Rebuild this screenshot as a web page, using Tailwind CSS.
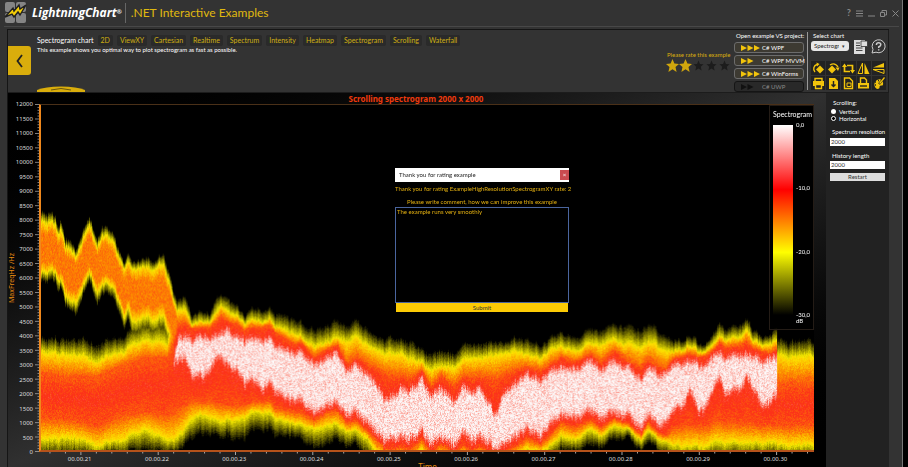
<!DOCTYPE html>
<html lang="en">
<head>
<meta charset="utf-8">
<title>LightningChart .NET Interactive Examples</title>
<script src="https://cdn.jsdelivr.net/npm/@tailwindcss/browser@4"></script>
</head>
<body class="h-screen overflow-hidden bg-black pr-[5px] font-[Lato,'Noto_Sans',sans-serif] text-[6px] leading-[8px] text-white">
<div class="flex h-full flex-col border-r border-[#777] bg-[#333] pl-[7px] pr-[13px]">
  <header class="-ml-[3px] -mr-[10px] flex h-[27px] shrink-0 items-center border-b border-[#484848]">
    <svg class="h-[22px] w-[23px]" viewBox="0 0 23 22" role="img" aria-label="LightningChart logo">
      <g fill="#858585"><rect x="1" y="0" width="10" height="10" rx="2"/><rect x="12" y="0" width="10" height="10" rx="2"/><rect x="1" y="11" width="10" height="10" rx="2"/><rect x="12" y="11" width="10" height="10" rx="2"/></g>
      <path d="M1 15L9 6L10 9L15 3L16 7L22 3L16 13L14 10L10 15L8 12Z" fill="#f5cf08" stroke="#202020" stroke-width="1.400"/>
    </svg>
    <span class="ml-[5px] font-['Open_Sans',sans-serif] text-[12px] font-bold italic leading-[16px]">LightningChart<sup class="text-[6px]">®</sup></span>
    <span class="ml-[3px] h-5 w-px bg-[#666]"></span>
    <h1 class="ml-[5px] text-[12px] leading-[16px] text-[#e0b90f]">.NET Interactive Examples</h1>
    <nav class="ml-auto flex items-center gap-[5px] text-[#888]" aria-label="Window">
      <button aria-label="Help" class="text-[9px] font-bold">?</button>
      <button aria-label="Menu"><svg class="size-[7px]" viewBox="0 0 7 7" stroke="currentColor"><path d="M0 1H7M0 3.500H7M0 6H7"/></svg></button>
      <button aria-label="Minimize"><svg class="size-[7px]" viewBox="0 0 7 7" stroke="currentColor"><path d="M0 6H7"/></svg></button>
      <button aria-label="Restore"><svg class="size-[7px]" viewBox="0 0 7 7" fill="none" stroke="currentColor"><path d="M.5 2.500H4.500V6.500H.5ZM2 2V.5H6.500V5H5"/></svg></button>
      <button aria-label="Close"><svg class="size-[7px]" viewBox="0 0 7 7" stroke="currentColor"><path d="M.5.5L6.500 6.500M6.500.5L.5 6.500"/></svg></button>
    </nav>
  </header>

  <main class="mt-[2px] flex min-h-0 flex-1 flex-col border-l border-t border-[#151515]">
    <section class="flex h-[63px] shrink-0 border-r border-b border-[#1c1c1c]">
      <button aria-label="Back" class="mt-4 flex h-[29px] w-[23px] items-center justify-center rounded-r-[3px] bg-[#d9ad0c]">
        <svg class="h-[14px] w-[7px]" viewBox="0 0 7 14" fill="none" stroke="#222" stroke-width="1.800"><path d="M6 1L1.500 7L6 13"/></svg>
      </button>
      <div class="ml-[6px] flex flex-1 flex-col pt-[5px]">
        <div class="flex items-center gap-[4px] text-[7px] leading-[11px]">
          <h2>Spectrogram chart</h2>
          <a href="#" class="rounded-[2px] bg-[#2a2a2a] px-[3px] text-[#d0b012]">2D</a>
          <a href="#" class="rounded-[2px] bg-[#2a2a2a] px-[3px] text-[#d0b012]">ViewXY</a>
          <a href="#" class="rounded-[2px] bg-[#2a2a2a] px-[3px] text-[#d0b012]">Cartesian</a>
          <a href="#" class="rounded-[2px] bg-[#2a2a2a] px-[3px] text-[#d0b012]">Realtime</a>
          <a href="#" class="rounded-[2px] bg-[#2a2a2a] px-[3px] text-[#d0b012]">Spectrum</a>
          <a href="#" class="rounded-[2px] bg-[#2a2a2a] px-[3px] text-[#d0b012]">Intensity</a>
          <a href="#" class="rounded-[2px] bg-[#2a2a2a] px-[3px] text-[#d0b012]">Heatmap</a>
          <a href="#" class="rounded-[2px] bg-[#2a2a2a] px-[3px] text-[#d0b012]">Spectrogram</a>
          <a href="#" class="rounded-[2px] bg-[#2a2a2a] px-[3px] text-[#d0b012]">Scrolling</a>
          <a href="#" class="rounded-[2px] bg-[#2a2a2a] px-[3px] text-[#d0b012]">Waterfall</a>
        </div>
        <p>This example shows you optimal way to plot spectrogram as fast as possible.</p>
        <svg class="mt-auto h-[6px] w-[48px]" viewBox="0 0 48 6" fill="none"><path d="M0 6V4Q8 .5 24 .5T48 4V6Z" fill="#d9ad0c"/><path d="M14 4Q24 1 34 4" stroke="#6b5810"/></svg>
      </div>
      <div class="mr-[6px] flex w-[62px] flex-col pt-[21px]">
        <span class="whitespace-nowrap pl-px text-[#d9ad0c]">Please rate this example</span>
        <div class="flex" role="group" aria-label="Rating">
          <button aria-label="1 star"><svg class="size-[13px]" viewBox="0 0 13 13" fill="#d0a60d"><path d="M6.500 0L8.400 4.500L13 5L9.500 8.100L10.600 13L6.500 10.300L2.400 13L3.500 8.100L0 5L4.600 4.500Z"/></svg></button>
          <button aria-label="2 stars"><svg class="size-[13px]" viewBox="0 0 13 13" fill="#d0a60d"><path d="M6.500 0L8.400 4.500L13 5L9.500 8.100L10.600 13L6.500 10.300L2.400 13L3.500 8.100L0 5L4.600 4.500Z"/></svg></button>
          <button aria-label="3 stars"><svg class="size-[13px]" viewBox="-2 -2 17 17" fill="#1c1c1c"><path d="M6.500 0L8.400 4.500L13 5L9.500 8.100L10.600 13L6.500 10.300L2.400 13L3.500 8.100L0 5L4.600 4.500Z"/></svg></button>
          <button aria-label="4 stars"><svg class="size-[13px]" viewBox="-2 -2 17 17" fill="#1c1c1c"><path d="M6.500 0L8.400 4.500L13 5L9.500 8.100L10.600 13L6.500 10.300L2.400 13L3.500 8.100L0 5L4.600 4.500Z"/></svg></button>
          <button aria-label="5 stars"><svg class="size-[13px]" viewBox="-2 -2 17 17" fill="#1c1c1c"><path d="M6.500 0L8.400 4.500L13 5L9.500 8.100L10.600 13L6.500 10.300L2.400 13L3.500 8.100L0 5L4.600 4.500Z"/></svg></button>
        </div>
      </div>
      <div class="flex w-[73px] flex-col gap-[2px] pr-[3px] pt-[2px]">
        <span class="whitespace-nowrap pl-[2px]">Open example VS project:</span>
        <button class="flex h-[11px] items-center gap-[2px] rounded-[3px] border border-[#6c6c6c] bg-[#3d3a32] pl-[6px]"><svg class="h-[6px] w-[19px]" viewBox="0 0 19 6" fill="#f2c40c"><path d="M0 0L6 3L0 6ZM6.500 0L12.500 3L6.500 6ZM13 0L19 3L13 6Z"/></svg>C# WPF</button>
        <button class="flex h-[11px] items-center gap-[2px] whitespace-nowrap rounded-[3px] border border-[#6c6c6c] bg-[#3d3a32] pl-[6px]"><svg class="h-[6px] w-[19px] shrink-0" viewBox="0 0 19 6" fill="#f2c40c"><path d="M0 0L6 3L0 6ZM6.500 0L12.500 3L6.500 6Z"/></svg>C# WPF MVVM</button>
        <button class="flex h-[11px] items-center gap-[2px] rounded-[3px] border border-[#6c6c6c] bg-[#3d3a32] pl-[6px]"><svg class="h-[6px] w-[19px]" viewBox="0 0 19 6" fill="#f2c40c"><path d="M0 0L6 3L0 6ZM6.500 0L12.500 3L6.500 6ZM13 0L19 3L13 6Z"/></svg>C# WinForms</button>
        <button disabled class="flex h-[11px] items-center gap-[2px] rounded-[3px] border border-[#151515] bg-[#292929] pl-[6px] text-[#888]"><svg class="h-[6px] w-[19px]" viewBox="0 0 19 6" fill="#111"><path d="M0 0L6 3L0 6ZM6.500 0L12.500 3L6.500 6Z"/></svg>C# UWP</button>
      </div>
      <div class="my-[2px] flex w-[81px] flex-col border-l border-[#999] pl-[3px] pr-[2px]">
        <div class="flex h-[29px] justify-between">
          <div class="flex flex-col">
            <label for="chart" class="pl-[2px]">Select chart</label>
            <span class="relative mt-px"><select id="chart" class="h-[10px] w-[38px] appearance-none rounded-[3px] bg-[#e8e8e8] pl-[3px] text-[6px] leading-[10px] text-[#222]"><option>Spectrogram</option></select><span class="pointer-events-none absolute right-px top-px w-[9px] bg-[#e8e8e8] text-center text-[5px] text-[#333]">▾</span></span>
          </div>
          <button aria-label="Source"><svg class="size-[15px]" viewBox="0 0 15 15"><path d="M1 1H12V15H1Z" fill="#ddd"/><path d="M8 2H14.500V7.500H8Z" fill="#ddd" stroke="#333" stroke-width=".8"/><path d="M3 4H7M3 6.500H7M3 9H9.500M3 11.500H9.500" stroke="#444"/></svg></button>
          <button aria-label="Information"><svg class="size-[15px]" viewBox="0 0 15 15" fill="none" stroke="#ccc"><path d="M1 14L2 10.500A6.500 6.500 0 1 1 5 13.200Z"/><path d="M5.400 6Q5.400 3.800 7.600 3.800T9.800 5.700Q9.800 6.700 7.700 8V9M7.700 10.200V11.500" stroke-width="1.500"/></svg></button>
        </div>
        <div class="grid grid-cols-5 gap-px" id="tools"></div>
      </div>
    </section>

    <div class="flex min-h-0 flex-1">
      <section class="relative flex min-w-0 flex-1 flex-col bg-linear-to-br from-black via-[#303030] to-black" aria-label="Scrolling spectrogram">
        <h2 class="h-[11px] shrink-0 pr-[2px] text-center font-['Noto_Sans',sans-serif] text-[8px] font-bold leading-[11px] text-[#f03a0c]">Scrolling spectrogram 2000 x 2000</h2>
        <div class="flex min-h-0 flex-1 pr-[12px]">
          <div class="flex w-[7px] items-center justify-center font-['Noto_Sans',sans-serif] text-[7px] text-[#e88a10]"><span class="rotate-180 whitespace-nowrap [writing-mode:vertical-rl]">MaxFreqHz /Hz</span></div>
          <div id="yaxis" class="-my-[7px] flex w-[18px] flex-col justify-between text-right font-['Noto_Sans',sans-serif] leading-[14px] text-[#ddd]"></div>
          <svg class="h-full w-[6px]" viewBox="0 0 6 346" preserveAspectRatio="none"><path id="yticks" stroke="#b9b9b9" stroke-width=".7"/></svg>
          <div class="relative min-w-0 flex-1 border-b-2 border-l-2 border-t border-b-[#b5521a] border-l-[#f0881c] border-t-[#4a3018] bg-black">
            <canvas id="plot" width="775" height="346" class="absolute inset-0 size-full"></canvas>
            <aside class="absolute right-0 top-0 flex h-[225px] w-[45px] flex-col border border-[#241c16] bg-black/70 px-[3px] pt-[4px]">
              <span class="text-[7px]">Spectrogram</span>
              <div class="mt-[7px] flex h-[190px] gap-[3px]">
                <span class="w-[20px] bg-[linear-gradient(#fff,#f00_34%,#ff0_67%,#000)]"></span>
                <div class="-my-[4px] flex flex-col justify-between whitespace-nowrap"><span>0,0</span><span>-10,0</span><span>-20,0</span><span>-30,0</span></div>
              </div>
              <span class="pl-[23px] pt-[2px]">dB</span>
            </aside>
          </div>
        </div>
        <div class="h-[15px] shrink-0 overflow-hidden pl-[33px] pr-[12px]">
          <svg class="h-[3px] w-full" viewBox="0 0 775 3" preserveAspectRatio="none"><path id="xticks" stroke="#aaa"/></svg>
          <div id="xaxis" class="grid grid-cols-10 text-center font-['Noto_Sans',sans-serif] leading-[8px] text-[#ddd]"></div>
          <div class="text-center font-['Noto_Sans',sans-serif] text-[8px] leading-[8px] text-[#e88a10]">Time</div>
        </div>

        <form class="absolute left-[387px] top-[75px] flex w-[174px] flex-col bg-black text-[#e4b010]" onsubmit="return false">
          <div class="flex h-[14px] items-center justify-between bg-white pl-[4px] text-[#222]"><span>Thank you for rating example</span><button type="button" aria-label="Close" class="flex h-[10px] w-[9px] items-center justify-center bg-[#c94b50] text-[6px] text-white">×</button></div>
          <p class="mt-[3px] whitespace-nowrap text-center">Thank you for rating ExampleHighResolutionSpectrogramXY rate: 2</p>
          <label for="comment" class="mt-[5px] text-center">Please write comment, how we can improve this example</label>
          <textarea id="comment" class="mt-px h-[96px] resize-none border border-[#4a659e] bg-black pl-px text-[6px] leading-[8px]">The example runs very smoothly</textarea>
          <button class="mx-px h-[9px] bg-[#fccb05] text-[6px] leading-[9px] text-[#333]">Submit</button>
        </form>
      </section>
      <aside class="flex w-[63px] flex-col bg-[#222] px-[4px] pt-[6px]">
        <fieldset><legend class="mb-px pl-[3px]">Scrolling:</legend>
          <label class="flex h-[7px] items-center gap-[3px]"><input type="radio" name="dir" class="ml-px size-[5px] appearance-none rounded-full bg-white">Vertical</label>
          <label class="flex h-[7px] items-center gap-[3px]"><input type="radio" name="dir" checked class="ml-px size-[5px] appearance-none rounded-full border border-white bg-black">Horizontal</label>
        </fieldset>
        <label for="res" class="mt-[6px] whitespace-nowrap pl-[2px]">Spectrum resolution</label>
        <input id="res" value="2000" class="mt-[2px] h-[8px] w-full bg-white px-px text-[6px] text-[#333]">
        <label for="len" class="mt-[6px] pl-[2px]">History length</label>
        <input id="len" value="2000" class="mt-[1px] h-[8px] w-full bg-white px-px text-[6px] text-[#333]">
        <button class="mt-[4px] h-[8px] bg-[#ddd] text-[6px] text-[#333]">Restart</button>
      </aside>
    </div>
  </main>
</div>
<script>
const el = id => document.getElementById(id);
// Toolbar icons
const tools = [
 ['Rotate left','<path d="M8 3.500L12 7.500L8 11.500L4 7.500Z" fill="#f2c40c" stroke="none"/><path d="M3 10A4.500 4.500 0 0 1 5 2.500"/><path d="M4.500 .5L7.500 2L5 4.500Z" fill="#f2c40c" stroke="none"/>'],
 ['Rotate right','<path d="M5 3.500L9 7.500L5 11.500L1 7.500Z" fill="#f2c40c" stroke="none"/><path d="M3 3Q8 0 11 5"/><path d="M8.500 5.500H12.500L11 9Z" fill="#f2c40c" stroke="none"/>'],
 ['Swap axes','<path d="M2.500 4V9.500H8M5 3.500H10.500V9" stroke-width="1.700"/><path d="M0 5L2.500 1.500L5 5ZM8 8L10.500 11.500L13 8Z" fill="#f2c40c" stroke="none"/>'],
 ['Flip horizontal','<path d="M5.500 1V11.500H1Z" stroke-width="1"/><path d="M7.500 1V12H12.500Z" fill="#f2c40c" stroke="none"/>'],
 ['Flip vertical','<path d="M12 1V5.500H1Z" fill="#f2c40c" stroke="none"/><path d="M1 7.500H12V11.500Z" stroke-width="1"/>'],
 ['Print','<path d="M3 4V1.500H10V4"/><path d="M1 4H12V9H1Z" fill="#f2c40c" stroke="none"/><path d="M3.500 7.500H9.500V11.500H3.500Z" fill="#222"/>'],
 ['Save','<path d="M2 1H8L11 4V12H2Z" fill="#f2c40c" stroke="none"/><path d="M6.500 4V9.500M4.500 7.500L6.500 9.500L8.500 7.500" stroke="#222"/>'],
 ['Copy','<path d="M2.500 1H7.500L10.500 4V11.500H2.500Z"/><path d="M5 6H9V9.500H5Z" stroke-width="1"/>'],
 ['Export','<path d="M3.500 6V1H7.500L9.500 3V6"/><path d="M1 6H12V11.500H1Z" fill="#f2c40c" stroke="none"/><path d="M3 9H10" stroke="#222"/>'],
 ['Theme','<path d="M10 3A5 5 0 1 0 5 12Q8 12 7.500 9.500Q8 8 10.500 8.500Q12 7 10 3Z" fill="#f2c40c" stroke="none"/><path d="M3 5H4M3 8H4M6 3.500H7" stroke="#222"/><path d="M12 1L7 7" stroke="#222" stroke-width="2.200"/><path d="M12.500 .5L7.500 6.500" stroke-width="1.200"/>']];
el('tools').innerHTML = tools.map(t => `<button aria-label="${t[0]}" class="flex h-[14px] items-center justify-center bg-[#222]"><svg class="size-[13px]" viewBox="0 0 13 13" fill="none" stroke="#f2c40c" stroke-width="1.400">${t[1]}</svg></button>`).join('');
// Axes
for (let v = 12000; v >= 0; v -= 500) el('yaxis').insertAdjacentHTML('beforeend', `<span>${v}</span>`);
for (let s = 21; s <= 30; s++) el('xaxis').insertAdjacentHTML('beforeend', `<span>00.00.${s}</span>`);
let yt = '', xt = '';
for (let i = 0; i <= 120; i++) yt += `M${i % 5 ? 4.500 : 2} ${(i * 345 / 120 + .5).toFixed(1)}H6`;
for (let i = 0; i < 50; i++) xt += `M${(i * 15.500 + 9).toFixed(1)} 0V${i % 5 === 2 ? 3 : 1.500}`;
el('yticks').setAttribute('d', yt); el('xticks').setAttribute('d', xt);

// Band outlines: x followed by the rows where the level crosses each step
const upper = [[39,212,222,235,262,273,283],[50,212,222,234,262,270,280],[56,224,232,244,270,278,290],[58,218,228,242,270,278,286],[63,238,246,256,283,295,305],[68,238,248,258,288,300,309],[73,250,257,265,292,303,316],[80,235,245,255,283,292,302],[87,216,224,235,265,272,281],[95,238,246,254,282,292,304],[100,226,236,246,275,284,295],[110,232,241,252,278,287,298],[117,250,258,268,295,302,314],[122,260,266,276,305,315,327],[126,254,264,275,300,310,322],[130,265,273,284,312,325,342],[137,260,268,280,308,320,336],[146,257,267,280,305,316,332],[154,262,270,282,310,322,340],[161,255,266,280,305,318,334],[166,268,278,290,318,330,346],[171,288,298,305,335,350,365],[180,315,325,335,350,360,370]];
const main = [[39,340,352,374,374,374,418,440,458],[70,340,355,377,377,377,420,438,458],[95,346,362,377,377,377,427,446,460],[120,338,352,366,366,366,415,440,455],[143,322,340,358,358,358,412,430,452],[165,325,345,358,358,358,415,440,455],[171,305,322,345,360,360,412,440,453],[176,300,310,326,336,360,408,436,452],[182,296,308,324,335,357,405,430,446],[190,316,324,329,338,375,400,418,438],[200,316,324,328,338,380,402,416,438],[208,315,322,328,338,370,400,418,436],[215,298,312,322,335,358,403,420,436],[219,293,303,316,328,353,403,420,436],[225,300,312,322,330,365,405,420,438],[235,305,315,325,335,370,405,420,440],[243,318,324,331,340,384,405,418,440],[250,310,320,328,338,380,402,412,432],[260,311,322,328,338,388,402,412,430],[268,308,318,326,336,382,400,412,430],[273,315,326,333,345,391,408,418,437],[285,318,332,340,350,400,410,422,438],[293,322,335,345,354,402,412,424,438],[300,325,338,343,352,402,413,425,442],[312,332,347,358,365,414,420,430,450],[325,327,343,350,357,406,412,426,446],[336,321,338,346,352,403,410,424,440],[346,328,342,366,371,416,423,432,448],[355,323,338,359,366,415,421,432,448],[365,330,345,365,373,422,430,438,458],[375,338,350,371,385,434,440,452,470],[387,340,355,378,402,443,450,460,480],[400,342,355,378,388,438,447,457,475],[410,343,360,380,390,440,449,459,475],[420,350,362,371,377,431,439,450,470],[430,356,371,388,397,446,453,462,480],[440,350,365,376,384,435,443,453,470],[452,356,369,388,402,447,453,462,480],[462,346,360,378,387,434,445,455,475],[471,345,358,380,392,442,451,460,475],[478,345,358,378,386,436,446,456,475],[494,343,355,382,414,450,456,465,480],[503,343,353,377,390,443,451,460,475],[515,340,352,372,384,438,446,456,470],[525,341,355,368,374,430,438,450,465],[540,347,358,372,380,436,444,452,468],[550,340,351,365,371,425,434,446,462],[560,332,345,358,366,415,422,436,450],[573,340,352,363,369,418,428,440,453],[590,331,344,355,361,412,420,430,447],[600,333,346,364,371,420,428,437,450],[614,323,338,351,358,411,418,425,438],[625,328,345,361,368,417,423,429,440],[640,331,347,369,377,427,434,440,450],[647,326,343,361,368,416,422,431,444],[655,330,345,367,373,424,431,438,450],[665,341,354,371,377,428,436,444,460],[672,342,352,359,365,412,428,446,462],[685,341,349,356,361,402,425,446,462],[689,336,346,354,360,388,425,446,462],[697,345,352,358,364,412,426,446,462],[708,343,349,355,362,402,425,446,462],[715,332,342,348,355,385,420,442,460],[719,323,335,343,352,378,420,442,460],[726,331,340,348,357,394,422,443,460],[740,327,338,346,355,390,423,443,460],[746,319,329,342,353,376,423,443,460],[752,330,340,348,356,389,423,443,460],[760,338,345,352,360,404,425,444,460],[768,341,347,354,361,408,425,444,460],[776,330,342,350,357,396,425,443,460]];
const tail = [343,357,384,384,384,426,446,463];
let seed = 7; const rnd = () => (seed = (seed * 1664525 + 1013904223) >>> 0) / 4294967296;
function at(t, x) { let i = 1; while (i < t.length - 1 && t[i][0] < x) i++; const a = t[i-1], b = t[i], f = Math.min(1, Math.max(0, (x - a[0]) / (b[0] - a[0]))); return a.slice(1).map((v, k) => v + (b[k+1] - v) * f); }
function level(pts, vals, y) { if (y <= pts[0] || y >= pts[pts.length-1]) return 0; for (let i = 1; i < pts.length; i++) if (y < pts[i]) return vals[i-1] + (vals[i] - vals[i-1]) * (y - pts[i-1]) / Math.max(.1, pts[i] - pts[i-1]); return 0; }
const ctx = el('plot').getContext('2d'), img = ctx.createImageData(775, 346);
let drift = 0;
for (let c = 0; c < 775; c++) {
  drift = drift * .7 + (rnd() - .5) * 4;
  const x = c + 39, j = drift + (rnd() - .5) * 2, k = drift + (rnd() - .5) * 4;
  const m = x > 776 ? tail.slice() : at(main, x), u = at(upper, x), white = x > 171 && x <= 776;
  m[0] += j - 2; m[1] += j * .7; m[3] += k; m[4] += k; m[7] += k; m[6] += k * .5;
  for (let i = 0; i < 6; i++) u[i] += j;
  for (let r = 0; r < 346; r++) {
    const y = r + 105;
    let v = white ? level([m[0],m[1],m[2],m[3]-3,m[3]+6,m[4]-6,m[4]+4,Math.max(m[5],m[4]+5),m[6],m[7]], [0,1,1.850,2.060,2.880,2.880,2.080,1.850,1,0], y)
      : level([m[0],m[1],m[2],(m[2]+m[5])/2,m[5],m[6],m[7]], [0,1,1.780,2.030,1.820,1,0], y);
    if (x < 180) v = Math.max(v, level(u, [0,1,1.600,1.600,1,0], y));
    if (v > .05) v += (rnd() + rnd() - 1) * (v > 2.200 ? .38 : v > 1.200 ? .22 : .12);
    v = Math.max(0, Math.min(3, v));
    const o = (r * 775 + c) * 4, hot = Math.max(0, v - 2.080) / .92;
    img.data[o] = v < 1 ? v * 240 : 252;
    img.data[o+1] = v < 1 ? v * 230 : v < 2 ? 230 - (v - 1) * 180 : 50 + hot * 200;
    img.data[o+2] = v < 2 ? Math.max(0, v - 1.500) * 50 : 25 + hot * 225;
    img.data[o+3] = 255;
  }
}
ctx.putImageData(img, 0, 0);
</script>
</body>
</html>
